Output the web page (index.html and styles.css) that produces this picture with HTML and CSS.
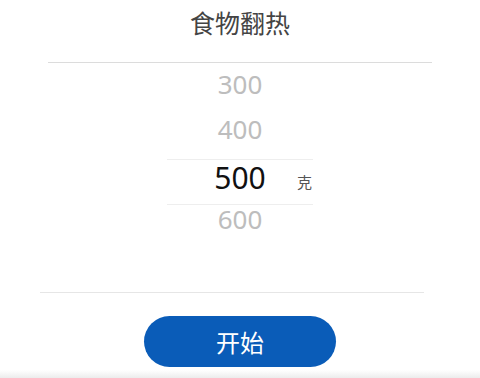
FILE: index.html
```html
<!DOCTYPE html>
<html lang="zh">
<head>
  <meta charset="UTF-8">
  <meta name="viewport" content="width=device-width, initial-scale=1.0">
  <title>食物翻热</title>
<link rel="stylesheet" href="styles.css">
</head>
<body>
<div class="dialog">
  <div class="title">食物翻热</div>
  <div class="divider top"></div>

  <div class="picker">
    <div class="item">300</div>
    <div class="item">400</div>
    <div class="item selected">
      <span class="value">500</span>
      <span class="unit">克</span>
    </div>
    <div class="item last">600</div>
  </div>

  <div class="divider bottom"></div>

  <div class="actions">
    <button class="start">开始</button>
  </div>
  <div class="shade"></div>
</div>
</body>
</html>
```

FILE: styles.css
```css
* {
  margin: 0;
  padding: 0;
  box-sizing: border-box;
}

body {
  width: 480px;
  height: 378px;
  overflow: hidden;
  background: #fff;
  font-family: "Noto Sans", "Noto Sans CJK SC", sans-serif;
}

.dialog {
  display: flex;
  flex-direction: column;
  height: 378px;
}

.title {
  height: 62px;
  padding-top: 5px;
  text-align: center;
  font-family: "Noto Sans CJK SC", sans-serif;
  font-size: 25px;
  line-height: 34px;
  color: #444;
}

.divider {
  height: 1px;
  background: #dcdcdc;
}
.divider.top    { margin: 0 48px; }
.divider.bottom { margin: 0 56px 0 40px; background: #e6e6e6; }

.picker {
  height: 229px;
  display: flex;
  flex-direction: column;
  align-items: center;
}

.item {
  width: 146px;
  height: 45px;
  padding-bottom: 4px;
  display: flex;
  align-items: center;
  justify-content: center;
  font-size: 26px;
  color: #bdbdbd;
}

.item.selected {
  position: relative;
  margin-top: 6px;
  height: 46px;
  border-top: 1px solid #eeeeee;
  border-bottom: 1px solid #eeeeee;
  color: #111;
  font-size: 30px;
  padding-bottom: 9px;
}

.unit {
  position: absolute;
  left: 130px;
  top: 11px;
  font-family: "Noto Sans CJK SC", sans-serif;
  font-size: 15px;
  color: #555;
}

.item.last {
  height: 30px;
  padding-bottom: 2px;
}

.actions {
  display: flex;
  justify-content: center;
  padding-top: 23px;
}

.start {
  width: 192px;
  height: 51px;
  border: none;
  border-radius: 26px;
  background: #0a5cb8;
  color: #fff;
  font-family: "Noto Sans CJK SC", sans-serif;
  font-size: 24px;
}

.shade {
  flex: 1;
  margin-top: 3px;
  background: linear-gradient(#fff, #ececec);
}
```
